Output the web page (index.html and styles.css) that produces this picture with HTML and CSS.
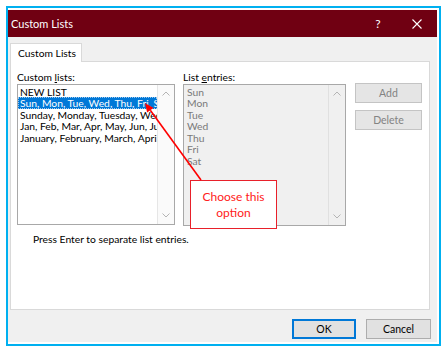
FILE: index.html
```html
<!DOCTYPE html>
<html>
<head>
<meta charset="utf-8">
<link rel="stylesheet" href="styles.css">
</head>
<body>
<div class="frame">
  <div class="dialog">
    <div class="titlebar">
      <span class="title">Custom Lists</span>
      <span class="help">?</span>
      <span class="close">
        <svg width="10" height="10" viewBox="0 0 10 10"><path d="M0.5 0.5 L9.5 9.5 M9.5 0.5 L0.5 9.5" stroke="#fff" stroke-width="1.1" fill="none"/></svg>
      </span>
    </div>
    <div class="body">
      <div class="tabs"><div class="tab">Custom Lists</div></div>
      <div class="panel">
        <div class="columns">
          <div class="col col-lists">
            <div class="label">Custom <u>l</u>ists:</div>
            <div class="listbox">
              <div class="items">
                <div class="item">NEW LIST</div>
                <div class="item selected">Sun, Mon, Tue, Wed, Thu, Fri, Sat</div>
                <div class="item">Sunday, Monday, Tuesday, Wednesday, Thursday, Friday, Saturday</div>
                <div class="item">Jan, Feb, Mar, Apr, May, Jun, Jul, Aug, Sep, Oct, Nov, Dec</div>
                <div class="item">January, February, March, April, May, June</div>
              </div>
              <div class="scrollbar">
                <svg class="chev" width="8" height="5" viewBox="0 0 8 5"><path d="M0.5 4.5 L4 1 L7.5 4.5" stroke="#b4b4b4" stroke-width="1" fill="none"/></svg>
                <svg class="chev" width="8" height="5" viewBox="0 0 8 5"><path d="M0.5 0.5 L4 4 L7.5 0.5" stroke="#b4b4b4" stroke-width="1" fill="none"/></svg>
              </div>
            </div>
          </div>
          <div class="col col-entries">
            <div class="label">List <u>e</u>ntries:</div>
            <div class="entrybox">
              <div class="items entries">
                <div class="item">Sun</div>
                <div class="item">Mon</div>
                <div class="item">Tue</div>
                <div class="item">Wed</div>
                <div class="item">Thu</div>
                <div class="item">Fri</div>
                <div class="item">Sat</div>
              </div>
              <div class="scrollbar">
                <svg class="chev" width="8" height="5" viewBox="0 0 8 5"><path d="M0.5 4.5 L4 1 L7.5 4.5" stroke="#b4b4b4" stroke-width="1" fill="none"/></svg>
                <svg class="chev" width="8" height="5" viewBox="0 0 8 5"><path d="M0.5 0.5 L4 4 L7.5 0.5" stroke="#b4b4b4" stroke-width="1" fill="none"/></svg>
              </div>
            </div>
          </div>
          <div class="col col-buttons">
            <button class="btn disabled">Add</button>
            <button class="btn disabled">Delete</button>
          </div>
        </div>
        <div class="hint">Press Enter to separate list entries.</div>
      </div>
      <div class="footer">
        <button class="btn ok">OK</button>
        <button class="btn">Cancel</button>
      </div>
    </div>
  </div>
  <div class="callout">Choose this<br>option</div>
  <svg class="arrow" width="431" height="336" viewBox="0 0 431 336">
    <line x1="193" y1="172" x2="142.3" y2="102.3" stroke="#f00" stroke-width="1.6"/>
    <polygon points="137,95 145.5,99.9 139.1,104.6" fill="#f00"/>
  </svg>
</div>
</body>
</html>
```

FILE: styles.css
```css
html, body {
  margin: 0;
  padding: 0;
  background: #ffffff;
}
body {
  font-family: Lato, "Noto Sans", sans-serif;
  font-size: 10.3px;
  color: #000;
}
.frame {
  position: relative;
  margin: 6px 0 0 6px;
  width: 429px;
  height: 334px;
  padding: 2px 2px 0 0;
  box-sizing: content-box;
  border: 2px solid #00b0f0;
}
.dialog {
  width: 429px;
  height: 332px;
  display: flex;
  flex-direction: column;
  background: #f0f0f0;
}
.titlebar {
  height: 27px;
  flex: none;
  background: #700012;
  color: #fff;
  display: flex;
  align-items: center;
  font-size: 11px;
}
.title {
  margin-left: 3px;
  flex: 1;
}
.help {
  width: 10px;
  text-align: center;
  margin-right: 29px;
  font-size: 12px;
}
.close {
  display: flex;
  margin-right: 15px;
}
.body {
  flex: 1;
  padding: 6px 0 0 2px;
  display: flex;
  flex-direction: column;
}
.tabs {
  display: flex;
  position: relative;
  z-index: 1;
  margin-bottom: -1px;
}
.tab {
  width: 72px;
  height: 19px;
  box-sizing: border-box;
  padding-left: 7px;
  line-height: 19px;
  white-space: nowrap;
  background: #fff;
  border: 1px solid #d9d9d9;
  border-bottom: none;
}
.panel {
  width: 420px;
  height: 249px;
  box-sizing: border-box;
  background: #fff;
  border: 1px solid #d9d9d9;
  padding: 8px 0 0 6px;
}
.columns {
  display: flex;
}
.col-lists {
  width: 158px;
}
.col-entries {
  width: 163px;
  margin-left: 8px;
}
.col-buttons {
  width: 67px;
  margin-left: 9px;
  padding-top: 13px;
  display: flex;
  flex-direction: column;
  gap: 7px;
}
.label {
  height: 13px;
  line-height: 14px;
  margin-bottom: 1px;
  white-space: nowrap;
}
.listbox, .entrybox {
  box-sizing: border-box;
  border: 1px solid #a8a8a8;
  display: flex;
  overflow: hidden;
}
.listbox {
  height: 141px;
  background: #fff;
}
.entrybox {
  height: 142px;
  background: #f0f0f0;
}
.items {
  flex: 1;
  min-width: 0;
  overflow: hidden;
  padding-top: 0.5px;
}
.item {
  height: 11.6px;
  line-height: 11.6px;
  padding: 1px 0 0 2px;
  white-space: nowrap;
  box-sizing: border-box;
}
.item.selected {
  background: #0078d7;
  color: #fff;
  outline: 1px dotted #9cc8ee;
  outline-offset: -1px;
}
.entries .item {
  color: #7a7a7a;
  padding-left: 3px;
}
.scrollbar {
  width: 16px;
  flex: none;
  border-left: 1px solid #e6e6e6;
  background: #fafafa;
  display: flex;
  flex-direction: column;
  justify-content: space-between;
  align-items: center;
  padding: 6px 0 6px 0;
}
.entrybox .scrollbar {
  background: #f0f0f0;
  border-left-color: #e0e0e0;
}
.chev {
  display: block;
}
.btn {
  font-family: Lato, "Noto Sans", sans-serif;
  font-size: 10.5px;
  height: 20px;
  box-sizing: border-box;
  background: #e1e1e1;
  border: 1px solid #adadad;
  padding: 0;
  margin: 0;
  color: #000;
  line-height: 17px;
}
.col-buttons .btn {
  width: 67px;
}
.btn.disabled {
  color: #838383;
  background: #e5e5e5;
  border-color: #c4c4c4;
}
.hint {
  margin: 7px 0 0 16px;
  line-height: 13px;
}
.footer {
  display: flex;
  justify-content: flex-end;
  gap: 10px;
  padding: 9px 6px 0 0;
}
.footer .btn {
  width: 65px;
}
.btn.ok {
  width: 64px;
  border: 2px solid #0078d7;
}
.callout {
  position: absolute;
  left: 182px;
  top: 172px;
  width: 87px;
  height: 49px;
  box-sizing: border-box;
  border: 1.5px solid #e8202a;
  background: #fff;
  color: #ff2020;
  font-size: 12px;
  line-height: 16px;
  text-align: center;
  display: flex;
  align-items: center;
  justify-content: center;
}
.arrow {
  position: absolute;
  left: 0;
  top: 0;
  pointer-events: none;
}
```
